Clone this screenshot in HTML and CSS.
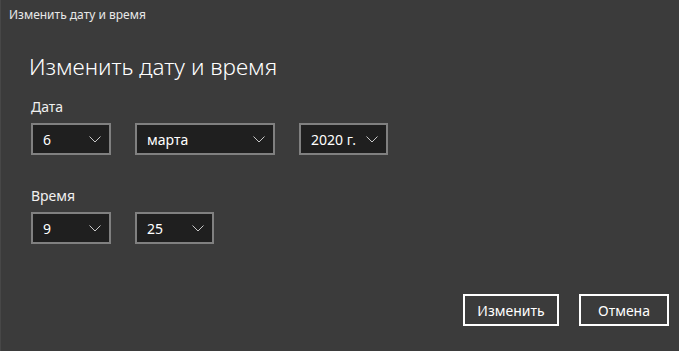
FILE: index.html
```html
<!DOCTYPE html>
<html lang="ru">
<head>
  <meta charset="UTF-8">
  <title>Изменить дату и время</title>
  <link rel="stylesheet" href="styles.css">
</head>
<body>
  <div class="titlebar">Изменить дату и время</div>

  <div class="content">
    <h1>Изменить дату и время</h1>

    <div class="label">Дата</div>
    <div class="row">
      <div class="select w-day"><span>6</span><svg class="chev" viewBox="0 0 12 7"><path d="M0.5 0.5 L6 6 L11.5 0.5"/></svg></div>
      <div class="select w-month"><span>марта</span><svg class="chev" viewBox="0 0 12 7"><path d="M0.5 0.5 L6 6 L11.5 0.5"/></svg></div>
      <div class="select w-year"><span>2020 г.</span><svg class="chev" viewBox="0 0 12 7"><path d="M0.5 0.5 L6 6 L11.5 0.5"/></svg></div>
    </div>

    <div class="label time">Время</div>
    <div class="row">
      <div class="select w-day"><span>9</span><svg class="chev" viewBox="0 0 12 7"><path d="M0.5 0.5 L6 6 L11.5 0.5"/></svg></div>
      <div class="select w-min"><span>25</span><svg class="chev" viewBox="0 0 12 7"><path d="M0.5 0.5 L6 6 L11.5 0.5"/></svg></div>
    </div>
  </div>

  <div class="actions">
    <button class="btn-ok">Изменить</button>
    <button class="btn-cancel">Отмена</button>
  </div>
</body>
</html>
```

FILE: styles.css
```css
* { box-sizing: border-box; margin: 0; padding: 0; }
html, body { height: 100%; }
body {
  font-family: "Noto Sans", "Open Sans", sans-serif;
  background: #3b3b3b;
  color: #fff;
  border-left: 1px solid #474747;
}
.titlebar {
  height: 30px;
  line-height: 30px;
  padding-left: 8px;
  font-size: 12px;
  color: #e8e8e8;
}
.content { padding-left: 30px; }
h1 {
  margin: 22px 0 0 -2px;
  font-size: 22.5px;
  font-weight: 300;
  line-height: 30px;
}
.label {
  margin-top: 15px;
  font-size: 14px;
  line-height: 20px;
  color: #f0f0f0;
}
.label.time { margin-top: 31px; }
.row {
  display: flex;
  gap: 24px;
  margin-top: 6px;
}
.select {
  display: flex;
  align-items: center;
  justify-content: space-between;
  height: 32px;
  padding: 0 8px 0 10px;
  border: 2px solid #808080;
  background: #1f1f1f;
  font-size: 14px;
}
.w-day { width: 80px; }
.w-month { width: 140px; }
.w-year { width: 89px; }
.w-min { width: 79px; }
.chev {
  width: 12px;
  height: 7px;
  fill: none;
  stroke: #c8c8c8;
  stroke-width: 1;
}
.actions {
  display: flex;
  justify-content: flex-end;
  gap: 20px;
  margin-top: 50px;
  padding-right: 10px;
}
.actions button {
  height: 32px;
  border: 2px solid #fff;
  background: transparent;
  color: #fff;
  font-family: inherit;
  font-size: 14px;
}
.btn-ok { width: 96px; }
.btn-cancel { width: 90px; }
```
